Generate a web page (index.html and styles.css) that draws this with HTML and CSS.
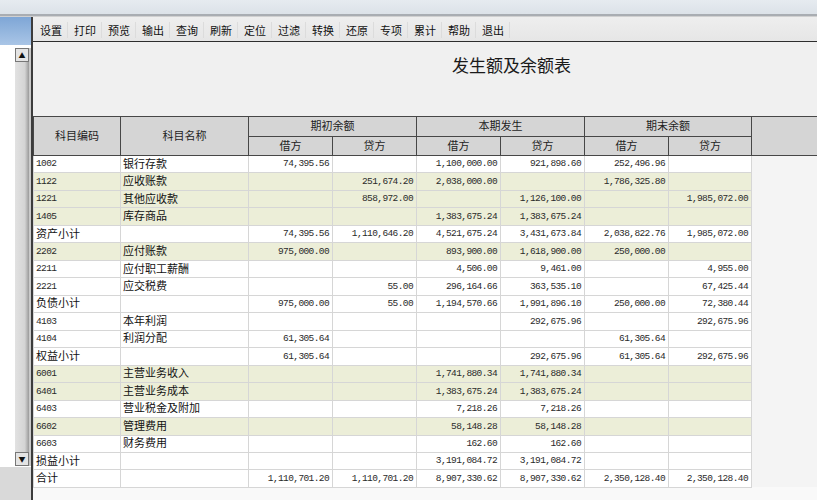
FILE: index.html
```html
<!DOCTYPE html>
<html lang="zh-CN">
<head>
<meta charset="UTF-8">
<title>发生额及余额表</title>
<link rel="stylesheet" href="styles.css">
</head>
<body>
<div class="topbar"></div>
<div class="frame">
<div class="side">
<div class="side-head"></div>
<div class="side-body">
<div class="side-blank"></div>
<div class="scrollbar">
<div class="sb-btn">&#9650;</div>
<div class="sb-track"></div>
<div class="sb-btn">&#9660;</div>
</div>
<div class="side-edge"></div>
</div>
<div class="side-foot"></div>
</div>
<div class="panel">
<div class="toolbar">
<span class="tool">设置</span>
<span class="tool">打印</span>
<span class="tool">预览</span>
<span class="tool">输出</span>
<span class="tool">查询</span>
<span class="tool">刷新</span>
<span class="tool">定位</span>
<span class="tool">过滤</span>
<span class="tool">转换</span>
<span class="tool">还原</span>
<span class="tool">专项</span>
<span class="tool">累计</span>
<span class="tool">帮助</span>
<span class="tool">退出</span>
</div>
<div class="title-area">
<h1 class="report-title">发生额及余额表</h1>
</div>
<div class="grid-area">
<table class="report">
<colgroup>
<col class="c-code"><col class="c-name"><col class="c-num"><col class="c-num"><col class="c-num"><col class="c-num"><col class="c-num"><col class="c-num2"><col>
</colgroup>
<thead>
<tr>
<th rowspan="2">科目编码</th>
<th rowspan="2">科目名称</th>
<th colspan="2">期初余额</th>
<th colspan="2">本期发生</th>
<th colspan="2">期末余额</th>
<th rowspan="2" class="th-rest"></th>
</tr>
<tr>
<th>借方</th><th>贷方</th><th>借方</th><th>贷方</th><th>借方</th><th>贷方</th>
</tr>
</thead>
<tbody>
<tr><td class="code">1002</td><td class="name">银行存款</td><td class="num">74,395.56</td><td class="num"></td><td class="num">1,100,000.00</td><td class="num">921,898.60</td><td class="num">252,496.96</td><td class="num"></td><td class="rest"></td></tr>
<tr class="hl"><td class="code">1122</td><td class="name">应收账款</td><td class="num"></td><td class="num">251,674.20</td><td class="num">2,038,000.00</td><td class="num"></td><td class="num">1,786,325.80</td><td class="num"></td><td class="rest"></td></tr>
<tr class="hl"><td class="code">1221</td><td class="name">其他应收款</td><td class="num"></td><td class="num">858,972.00</td><td class="num"></td><td class="num">1,126,100.00</td><td class="num"></td><td class="num">1,985,072.00</td><td class="rest"></td></tr>
<tr class="hl"><td class="code">1405</td><td class="name">库存商品</td><td class="num"></td><td class="num"></td><td class="num">1,383,675.24</td><td class="num">1,383,675.24</td><td class="num"></td><td class="num"></td><td class="rest"></td></tr>
<tr><td class="code sub">资产小计</td><td class="name"></td><td class="num">74,395.56</td><td class="num">1,110,646.20</td><td class="num">4,521,675.24</td><td class="num">3,431,673.84</td><td class="num">2,038,822.76</td><td class="num">1,985,072.00</td><td class="rest"></td></tr>
<tr class="hl"><td class="code">2202</td><td class="name">应付账款</td><td class="num">975,000.00</td><td class="num"></td><td class="num">893,900.00</td><td class="num">1,618,900.00</td><td class="num">250,000.00</td><td class="num"></td><td class="rest"></td></tr>
<tr><td class="code">2211</td><td class="name">应付职工薪酬</td><td class="num"></td><td class="num"></td><td class="num">4,506.00</td><td class="num">9,461.00</td><td class="num"></td><td class="num">4,955.00</td><td class="rest"></td></tr>
<tr><td class="code">2221</td><td class="name">应交税费</td><td class="num"></td><td class="num">55.00</td><td class="num">296,164.66</td><td class="num">363,535.10</td><td class="num"></td><td class="num">67,425.44</td><td class="rest"></td></tr>
<tr><td class="code sub">负债小计</td><td class="name"></td><td class="num">975,000.00</td><td class="num">55.00</td><td class="num">1,194,570.66</td><td class="num">1,991,896.10</td><td class="num">250,000.00</td><td class="num">72,380.44</td><td class="rest"></td></tr>
<tr><td class="code">4103</td><td class="name">本年利润</td><td class="num"></td><td class="num"></td><td class="num"></td><td class="num">292,675.96</td><td class="num"></td><td class="num">292,675.96</td><td class="rest"></td></tr>
<tr><td class="code">4104</td><td class="name">利润分配</td><td class="num">61,305.64</td><td class="num"></td><td class="num"></td><td class="num"></td><td class="num">61,305.64</td><td class="num"></td><td class="rest"></td></tr>
<tr><td class="code sub">权益小计</td><td class="name"></td><td class="num">61,305.64</td><td class="num"></td><td class="num"></td><td class="num">292,675.96</td><td class="num">61,305.64</td><td class="num">292,675.96</td><td class="rest"></td></tr>
<tr class="hl"><td class="code">6001</td><td class="name">主营业务收入</td><td class="num"></td><td class="num"></td><td class="num">1,741,880.34</td><td class="num">1,741,880.34</td><td class="num"></td><td class="num"></td><td class="rest"></td></tr>
<tr class="hl"><td class="code">6401</td><td class="name">主营业务成本</td><td class="num"></td><td class="num"></td><td class="num">1,383,675.24</td><td class="num">1,383,675.24</td><td class="num"></td><td class="num"></td><td class="rest"></td></tr>
<tr><td class="code">6403</td><td class="name">营业税金及附加</td><td class="num"></td><td class="num"></td><td class="num">7,218.26</td><td class="num">7,218.26</td><td class="num"></td><td class="num"></td><td class="rest"></td></tr>
<tr class="hl"><td class="code">6602</td><td class="name">管理费用</td><td class="num"></td><td class="num"></td><td class="num">58,148.28</td><td class="num">58,148.28</td><td class="num"></td><td class="num"></td><td class="rest"></td></tr>
<tr><td class="code">6603</td><td class="name">财务费用</td><td class="num"></td><td class="num"></td><td class="num">162.60</td><td class="num">162.60</td><td class="num"></td><td class="num"></td><td class="rest"></td></tr>
<tr><td class="code sub">损益小计</td><td class="name"></td><td class="num"></td><td class="num"></td><td class="num">3,191,084.72</td><td class="num">3,191,084.72</td><td class="num"></td><td class="num"></td><td class="rest"></td></tr>
<tr><td class="code sub">合计</td><td class="name"></td><td class="num">1,110,701.20</td><td class="num">1,110,701.20</td><td class="num">8,907,330.62</td><td class="num">8,907,330.62</td><td class="num">2,350,128.40</td><td class="num">2,350,128.40</td><td class="rest"></td></tr>
</tbody>
</table>
</div>
</div>
</div>
</body>
</html>
```

FILE: styles.css
```css
html, body {
    margin: 0;
    height: 500px;
    overflow: hidden;
}

body {
    background-color: #f0f0f0;
    font: 11px/1 "Noto Sans CJK SC", "Liberation Sans", sans-serif;
    color: #111;
}

.topbar {
    height: 14px;
    background: linear-gradient(#e6ebf0, #dce2e8);
    border-bottom: 2px solid #a9adb2;
}

.frame {
    display: flex;
    height: 483px;
    border-top: 1px solid #d0d0d0;
}

/* left strip with the vertical scrollbar */
.side {
    width: 31px;
    flex-shrink: 0;
    display: flex;
    flex-direction: column;
    background-color: #fff;
}

.side-head {
    height: 28px;
    background: linear-gradient(#7ea6d6, #a9c5e6);
}

.side-body {
    height: 422px;
    display: flex;
    box-sizing: border-box;
    padding: 3px 0 1px;
}

.side-blank {
    width: 15px;
    background-color: #fff;
}

.scrollbar {
    width: 14px;
    display: flex;
    flex-direction: column;
}

.sb-btn {
    height: 14px;
    box-sizing: border-box;
    border: 1px solid #777;
    background: #e4e4e4;
    font-size: 7px;
    line-height: 12px;
    text-align: center;
    color: #111;
}

.sb-track {
    flex: 1;
    background: linear-gradient(90deg, #e2e2e2 0, #d4d4d4 70%, #9a9a9a 100%);
}

.side-edge {
    width: 2px;
    background-color: #c9c9c9;
}

.side-foot {
    flex: 1;
    background-color: #d9d9d9;
}

.panel {
    flex: 1;
    display: flex;
    flex-direction: column;
    border-left: 2px solid #3c3c3c;
    background-color: #f0f0f0;
}

.toolbar {
    height: 24px;
    flex-shrink: 0;
    box-sizing: border-box;
    display: flex;
    align-items: center;
    padding: 2px 0 0 1px;
    background: linear-gradient(#eeeeee, #e6e6e6);
    border-bottom: 1px solid #2e2e2e;
    height: 25px;
}

.tool {
    padding: 0 5px 0 6px;
    border-right: 1px solid #dcdcdc;
    line-height: 16px;
    color: #111;
}

.title-area {
    height: 74px;
    flex-shrink: 0;
    box-sizing: border-box;
    padding: 13px 0 0 419px;
}

.report-title {
    margin: 0;
    font-size: 17px;
    font-weight: normal;
    line-height: 20px;
    color: #1a1a1a;
}

.grid-area {
    flex: 1;
    background-color: #f9f9f9;
}

.report {
    border-collapse: collapse;
    table-layout: fixed;
    width: 784px;
}

.c-code { width: 87px; }
.c-name { width: 128px; }
.c-num { width: 84px; }
.c-num2 { width: 83px; }

.report th {
    height: 17.5px;
    padding: 0 0 1px;
    background-color: #d5d5d5;
    border: 1px solid #474747;
    font-weight: normal;
    color: #1e1e1e;
    text-align: center;
}

.report .th-rest {
    border-right: none;
}

.report td {
    height: 16.47px;
    padding: 0 3px 0 2px;
    border: 1px solid #d6d6d6;
    background-color: #fff;
    white-space: nowrap;
    overflow: hidden;
}

.report td.name,
.report td.sub {
    padding-bottom: 2px;
    height: 14.47px;
}

.report tr.hl td {
    background-color: #eceed8;
}

.report td.rest,
.report tr.hl td.rest {
    background-color: #f4f4f4;
    border: none;
    border-left: 1px solid #c4c4c4;
}

.code,
.num {
    font-family: "Liberation Mono", monospace;
    font-size: 9.5px;
    letter-spacing: -0.6px;
    color: #2a2a2a;
}

.code.sub {
    font-family: "Noto Sans CJK SC", sans-serif;
    font-size: 11px;
    letter-spacing: 0;
    color: #111;
}

.num {
    text-align: right;
}
```
